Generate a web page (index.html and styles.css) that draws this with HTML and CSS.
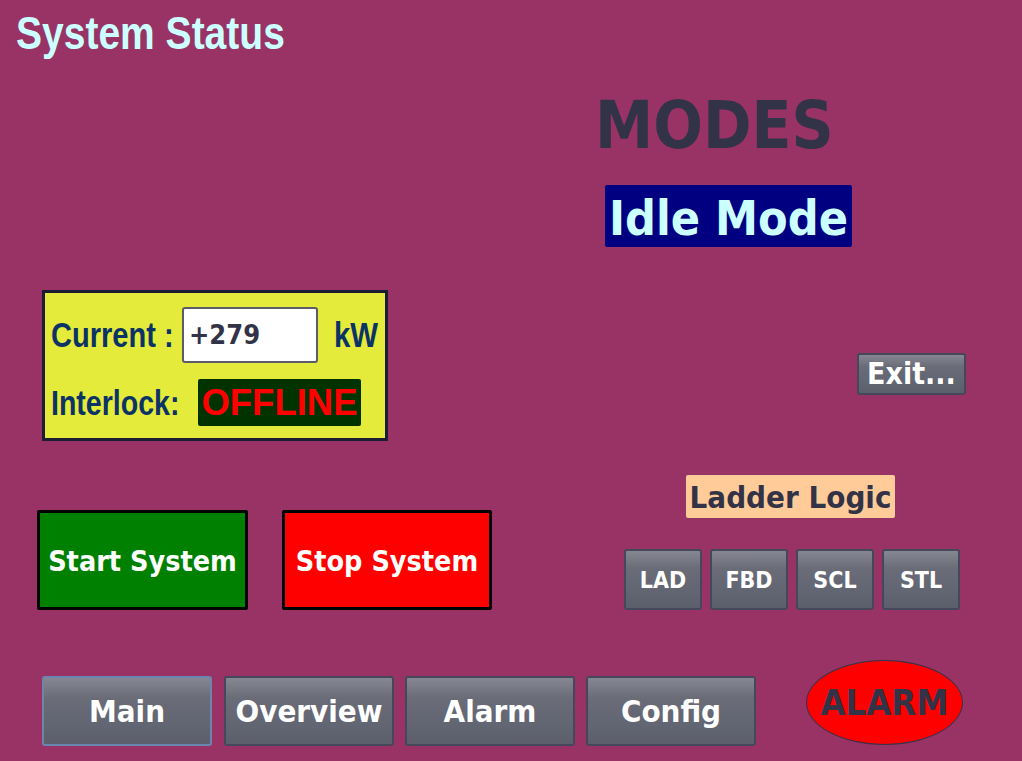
FILE: index.html
```html
<!DOCTYPE html>
<html lang="en">
<head>
<meta charset="utf-8">
<title>System Status</title>
<link rel="stylesheet" href="styles.css">
</head>
<body>
<div class="screen">
  <header class="title"><span class="narrow">System Status</span></header>
  <div class="content">
    <section class="left">
      <div class="panel">
        <div class="panel-row row-current">
          <span class="label label-current"><span class="narrow">Current :</span></span>
          <div class="value-field">+279</div>
          <span class="label label-unit"><span class="narrow">kW</span></span>
        </div>
        <div class="panel-row row-interlock">
          <span class="label label-interlock"><span class="narrow">Interlock:</span></span>
          <div class="status-offline">OFFLINE</div>
        </div>
      </div>
      <div class="actions">
        <button class="action start">Start System</button>
        <button class="action stop">Stop System</button>
      </div>
    </section>
    <section class="right">
      <h2 class="modes">MODES</h2>
      <div class="mode-badge">Idle Mode</div>
      <button class="btn exit">Exit...</button>
      <div class="ladder-label">Ladder Logic</div>
      <div class="lang-row">
        <button class="btn lang">LAD</button>
        <button class="btn lang">FBD</button>
        <button class="btn lang">SCL</button>
        <button class="btn lang">STL</button>
      </div>
    </section>
  </div>
  <nav class="bottom-nav">
    <button class="btn nav active">Main</button>
    <button class="btn nav nav-overview">Overview</button>
    <button class="btn nav">Alarm</button>
    <button class="btn nav">Config</button>
    <div class="alarm-lamp">ALARM</div>
  </nav>
</div>
</body>
</html>
```
FILE: styles.css
```css
html, body {
  margin: 0;
  padding: 0;
}
body {
  background: #993366;
  width: 1022px;
  height: 761px;
  overflow: hidden;
}
.screen {
  width: 1022px;
  height: 761px;
  display: flex;
  flex-direction: column;
}
.narrow {
  display: inline-block;
  white-space: nowrap;
  transform: scaleX(0.83);
  transform-origin: left center;
}
.title {
  height: 66px;
  box-sizing: border-box;
  padding: 7px 0 0 16px;
  font-family: "Liberation Sans", Arial, sans-serif;
  font-weight: bold;
  font-size: 46px;
  line-height: 53px;
  color: #ccffff;
}
.title .narrow {
  transform: scaleX(0.848);
}
.content {
  display: grid;
  grid-template-columns: 560px 1fr;
  height: 544px;
}
.left {
  display: flex;
  flex-direction: column;
  align-items: flex-start;
}
.panel {
  margin: 224px 0 0 42px;
  width: 346px;
  height: 151px;
  box-sizing: border-box;
  border: 3px solid #1b1e33;
  background: #e5eb3a;
  padding: 14px 0 0 6px;
  display: flex;
  flex-direction: column;
  gap: 16px;
}
.panel-row {
  display: flex;
  align-items: center;
}
.row-current { height: 56px; }
.row-interlock { height: 47px; }
.label {
  display: block;
  font-family: "Liberation Sans", Arial, sans-serif;
  font-weight: bold;
  font-size: 35px;
  color: #0b3366;
  white-space: nowrap;
}
.label-current { width: 131px; }
.label-interlock { width: 147px; }
.label-unit { width: 44px; margin-left: 16px; }
.label-unit .narrow { transform: scaleX(0.84); }
.label-interlock .narrow { transform: scaleX(0.815); }
.value-field {
  width: 136px;
  height: 56px;
  box-sizing: border-box;
  background: #ffffff;
  border: 2px solid #5c5c68;
  border-radius: 3px;
  padding: 0 0 0 5px;
  font-family: "DejaVu Sans Condensed", "DejaVu Sans", sans-serif;
  font-weight: bold;
  font-size: 27px;
  line-height: 52px;
  color: #333348;
}
.status-offline {
  width: 163px;
  height: 47px;
  box-sizing: border-box;
  background: #003300;
  border-radius: 2px;
  text-align: center;
  font-family: "Liberation Sans", Arial, sans-serif;
  font-weight: bold;
  font-size: 36.5px;
  line-height: 48px;
  color: #ff0000;
}
.actions {
  display: flex;
  margin: 69px 0 0 37px;
  gap: 34px;
}
.action {
  height: 100px;
  box-sizing: border-box;
  border: 3px solid #000000;
  border-radius: 2px;
  padding: 3px 0 0 0;
  color: #ffffff;
  font-family: "DejaVu Sans Condensed", "DejaVu Sans", sans-serif;
  font-weight: bold;
  font-size: 28.5px;
}
.start { width: 211px; background: #008000; }
.stop { width: 210px; background: #ff0000; }

.right {
  display: flex;
  flex-direction: column;
  align-items: flex-start;
}
.modes {
  margin: 28px 0 0 35px;
  font-family: "DejaVu Sans Condensed", "DejaVu Sans", sans-serif;
  font-weight: bold;
  font-size: 65px;
  line-height: 64px;
  color: #333348;
}
.mode-badge {
  margin: 27px 0 0 45px;
  width: 247px;
  height: 62px;
  box-sizing: border-box;
  padding-top: 4px;
  background: #000080;
  border-radius: 2px;
  text-align: center;
  font-family: "DejaVu Sans Condensed", "DejaVu Sans", sans-serif;
  font-weight: bold;
  font-size: 48px;
  line-height: 58px;
  color: #ccffff;
  white-space: nowrap;
}
.btn {
  box-sizing: border-box;
  border: 2px solid #45485a;
  border-radius: 3px;
  background: linear-gradient(to bottom, #868792 0%, #6a6c78 30%, #626572 70%, #5c5f6b 100%);
  color: #ffffff;
  font-family: "DejaVu Sans Condensed", "DejaVu Sans", sans-serif;
  font-weight: bold;
  padding: 0;
  white-space: nowrap;
}
.exit {
  margin: 106px 0 0 297px;
  width: 109px;
  height: 42px;
  font-size: 30px;
  line-height: 36px;
}
.ladder-label {
  margin: 80px 0 0 126px;
  width: 209px;
  height: 43px;
  box-sizing: border-box;
  background: #ffcc99;
  border-radius: 2px;
  text-align: center;
  font-family: "DejaVu Sans Condensed", "DejaVu Sans", sans-serif;
  font-weight: bold;
  font-size: 31px;
  line-height: 45px;
  color: #333348;
  white-space: nowrap;
}
.lang-row {
  display: flex;
  gap: 8px;
  margin: 31px 0 0 64px;
}
.lang {
  width: 78px;
  height: 61px;
  font-size: 23px;
}
.bottom-nav {
  display: flex;
  align-items: flex-start;
  margin-top: 50px;
  padding-left: 42px;
  gap: 11px;
}
.nav {
  margin-top: 16px;
  width: 170px;
  height: 70px;
  font-size: 31px;
}
.nav-overview {
  margin-left: 1px;
}
.nav.active {
  border-color: #6a86b0;
}
.alarm-lamp {
  margin-left: 39px;
  width: 157px;
  height: 85px;
  box-sizing: border-box;
  border: 1px solid #33334a;
  border-radius: 50%;
  background: #ff0000;
  text-align: center;
  font-family: "DejaVu Sans Condensed", "DejaVu Sans", sans-serif;
  font-weight: bold;
  font-size: 36px;
  line-height: 83px;
  color: #333348;
}
```
